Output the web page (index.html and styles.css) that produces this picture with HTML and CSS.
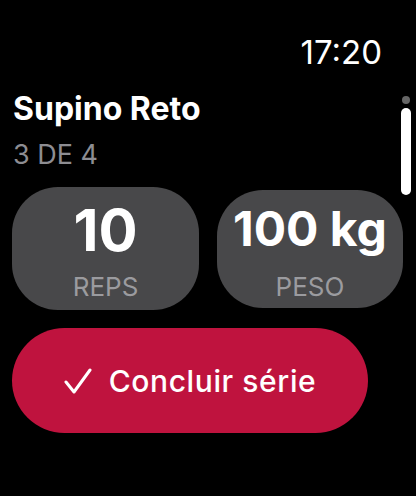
FILE: index.html
```html
<!DOCTYPE html>
<html lang="pt">
<head>
  <meta charset="UTF-8">
  <meta name="viewport" content="width=device-width, initial-scale=1.0">
  <title>Supino Reto</title>
  <link rel="stylesheet" href="styles.css">
</head>
<body>

  <div class="watch">
    <div class="status-bar">
      <div class="time">17:20</div>
    </div>

    <div class="exercise">
      <div class="name">Supino Reto</div>
      <div class="set">3 DE 4</div>
    </div>

    <div class="stats">
      <div class="stat-card">
        <div class="value">10</div>
        <div class="label">REPS</div>
      </div>
      <div class="stat-card small">
        <div class="value">100 kg</div>
        <div class="label">PESO</div>
      </div>
    </div>

    <button class="done-btn">
      <svg class="check" viewBox="0 0 28 26" width="28" height="26">
        <path d="M2 14 L10 24 L26 2" fill="none" stroke="#fff" stroke-width="3" stroke-linecap="round" stroke-linejoin="round"/>
      </svg>
      <span>Concluir série</span>
    </button>

    <div class="scroll-indicator">
      <div class="scroll-dot"></div>
      <div class="scroll-bar"></div>
    </div>
  </div>

</body>
</html>
```

FILE: styles.css
```css
body {
  margin: 0;
  background: #000;
  color: #fff;
  font-family: Inter, "Noto Sans", sans-serif;
}
.watch {
  position: relative;
  width: 416px;
  height: 496px;
  padding: 34px 12px 0;
  box-sizing: border-box;
}
.status-bar {
  display: flex;
  justify-content: flex-end;
  padding-right: 22px;
}
.time {
  font-size: 33px;
  line-height: 36px;
}
.exercise {
  margin-top: 21px;
  padding-left: 1px;
}
.name {
  font-size: 32px;
  font-weight: 700;
  line-height: 36px;
}
.set {
  margin-top: 13px;
  font-size: 27px;
  line-height: 30px;
  color: #8d8d92;
}
.stats {
  display: grid;
  grid-template-columns: 187px 186px;
  gap: 18px;
  align-items: start;
  margin-top: 17px;
}
.stat-card {
  height: 123px;
  padding-top: 18px;
  box-sizing: border-box;
  background: #48484a;
  border-radius: 46px;
  display: flex;
  flex-direction: column;
  align-items: center;
}
.stat-card.small {
  height: 118px;
  margin-top: 3px;
  padding-top: 14px;
}
.value {
  font-size: 58px;
  font-weight: 700;
  line-height: 50px;
}
.small .value {
  font-size: 48px;
}
.label {
  margin-top: 20px;
  font-size: 26px;
  line-height: 24px;
  color: #9b9b9f;
}
.small .label {
  margin-top: 21px;
}
.done-btn {
  display: flex;
  align-items: center;
  justify-content: center;
  gap: 17px;
  width: 356px;
  height: 105px;
  margin-top: 18px;
  border: none;
  border-radius: 53px;
  background: #bf133e;
  color: #fff;
  font-family: inherit;
  font-size: 30px;
  font-weight: 500;
  letter-spacing: 0.6px;
}
.check {
  display: block;
}
.scroll-indicator {
  position: absolute;
  top: 96px;
  left: 401px;
  display: flex;
  flex-direction: column;
  align-items: center;
  gap: 4px;
}
.scroll-dot {
  width: 8px;
  height: 8px;
  border-radius: 50%;
  background: #666;
}
.scroll-bar {
  width: 10px;
  height: 87px;
  border-radius: 5px;
  background: #fff;
}
```
